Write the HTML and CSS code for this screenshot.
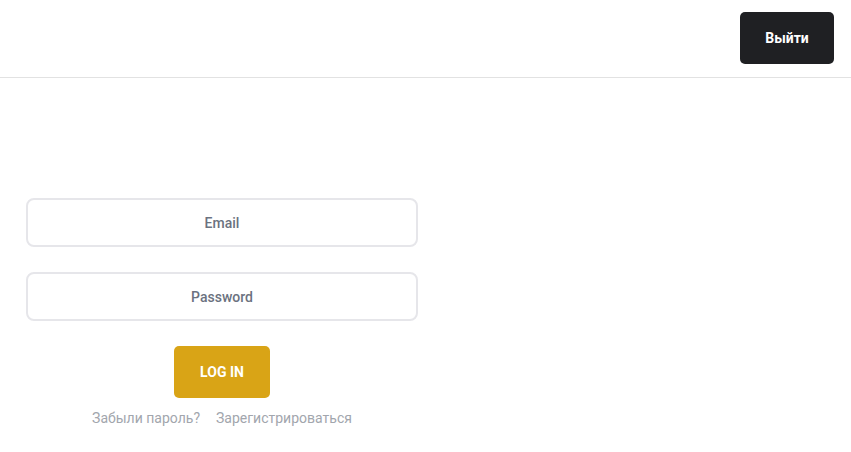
FILE: index.html
```html
<!DOCTYPE html>
<html lang="ru">
<head>
<meta charset="utf-8">
<title>Login</title>
<link rel="stylesheet" href="styles.css">
</head>
<body>
<header class="header">
  <button class="logout" type="button">Выйти</button>
</header>
<main class="main">
  <form class="form">
    <input class="field" type="email" placeholder="Email">
    <input class="field" type="password" placeholder="Password">
    <button class="login" type="button">LOG IN</button>
    <div class="links">
      <a class="link" href="#">Забыли пароль?</a>
      <a class="link" href="#">Зарегистрироваться</a>
    </div>
  </form>
</main>
</body>
</html>
```
FILE: styles.css
```css
* { box-sizing: border-box; }
html, body { margin: 0; padding: 0; background: #fff; }
body { font-family: Roboto, "Noto Sans", sans-serif; }
.header {
  height: 78px;
  border-bottom: 1px solid #e2e2e2;
  display: flex;
  justify-content: flex-end;
  align-items: flex-start;
  padding: 12px 17px 0 0;
}
.logout {
  width: 94px;
  height: 52px;
  border: none;
  border-radius: 5px;
  background: #1f2023;
  color: #fff;
  font-family: Roboto, sans-serif;
  font-weight: 700;
  font-size: 14px;
  cursor: pointer;
}
.main { padding: 120px 0 0 26px; }
.form {
  width: 392px;
  display: flex;
  flex-direction: column;
  align-items: center;
}
.field {
  width: 100%;
  height: 49px;
  border: 2px solid #e6e6ea;
  border-radius: 8px;
  background: #fff;
  text-align: center;
  font-family: Roboto, sans-serif;
  font-weight: 500;
  font-size: 14px;
  color: #6b7280;
  margin-bottom: 25px;
  outline: none;
}
.field::placeholder { color: #6b7280; opacity: 1; }
.login {
  width: 96px;
  height: 52px;
  border: none;
  border-radius: 5px;
  background: #d9a416;
  color: #fff;
  font-family: Roboto, sans-serif;
  font-weight: 700;
  font-size: 14px;
  cursor: pointer;
}
.links {
  margin-top: 12px;
  display: flex;
  gap: 16px;
  font-size: 14px;
}
.link { color: #a2a6ad; text-decoration: none; }
```
